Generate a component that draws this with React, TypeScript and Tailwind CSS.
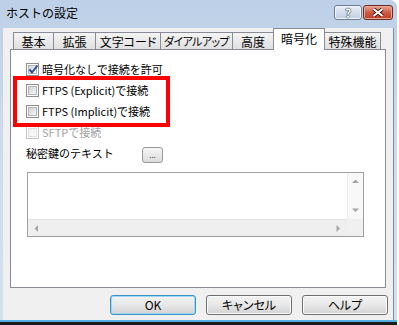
import React from 'react'

const font = "font-['Noto_Sans_CJK_JP',sans-serif]"

function CheckBox({ checked, disabled }: { checked?: boolean; disabled?: boolean }) {
  return (
    <span
      className={`relative flex h-[13px] w-[13px] shrink-0 items-center justify-center border bg-white ${
        disabled ? 'border-[#c4c4c4]' : 'border-[#8e8f8f]'
      }`}
    >
      <span
        className={`h-[9px] w-[9px] border bg-gradient-to-br ${
          disabled
            ? 'border-[#e0e0e0] from-[#f0f0f0] to-[#fafafa]'
            : 'border-[#b4b8bd] from-[#cfd3d8] to-[#f7f7f7]'
        }`}
      />
      {checked && (
        <svg className="absolute left-[1px] top-[0px]" width="11" height="11" viewBox="0 0 11 11">
          <path d="M1.5 5.5 L4 8.5 L9.5 1.5" fill="none" stroke="#2a4f8f" strokeWidth="2" />
        </svg>
      )}
    </span>
  )
}

function Row({ label, checked, disabled }: { label: string; checked?: boolean; disabled?: boolean }) {
  return (
    <div className="flex h-[21px] items-center gap-[3px]">
      <CheckBox checked={checked} disabled={disabled} />
      <span className={`whitespace-nowrap text-[11px] leading-none ${disabled ? 'text-[#a3a3a3]' : 'text-black'}`}>{label}</span>
    </div>
  )
}

function Arrow({ dir }: { dir: 'up' | 'down' | 'left' | 'right' }) {
  const d = {
    up: 'M0 4 L3.5 0.5 L7 4 Z',
    down: 'M0 0.5 L7 0.5 L3.5 4 Z',
    left: 'M4 0 L0.5 3.5 L4 7 Z',
    right: 'M0.5 0 L4 3.5 L0.5 7 Z',
  }[dir]
  const vert = dir === 'up' || dir === 'down'
  return (
    <svg width={vert ? 7 : 5} height={vert ? 5 : 7} viewBox={vert ? '0 0 7 5' : '0 0 5 7'}>
      <path d={d} fill="#a5a5a5" />
    </svg>
  )
}

function Tab({ label, w, active, first, tight }: { label: string; w: number; active?: boolean; first?: boolean; tight?: boolean }) {
  const size = tight ? 'text-[11px] tracking-[-0.6px]' : 'text-[12px]'
  if (active) {
    return (
      <div
        style={{ width: w }}
        className={`-ml-px flex h-[22px] items-start justify-center whitespace-nowrap border-x border-t border-[#898c95] bg-white pt-[3px] leading-[14px] [font-feature-settings:'palt'] ${size}`}
      >
        {label}
      </div>
    )
  }
  return (
    <div
      style={{ width: w }}
      className={`${first ? '' : '-ml-px'} mb-[1px] flex h-[17px] items-center justify-center overflow-hidden whitespace-nowrap border-x border-t border-[#898c95] bg-gradient-to-b from-[#f4f4f4] to-[#e0e0e0] pt-[1px] leading-none [font-feature-settings:'palt'] ${size}`}
    >
      {label}
    </div>
  )
}

function Button({ label, isDefault }: { label: string; isDefault?: boolean }) {
  return (
    <div
      className={`flex h-[20px] w-[86px] items-center justify-center rounded-[3px] border bg-gradient-to-b from-[#f2f2f2] via-[#e8e8e8] to-[#d2d2d2] text-[12px] leading-none [font-feature-settings:'palt'] ${
        isDefault ? 'border-[#3c91c9] shadow-[inset_0_0_0_1px_#9fd8f5]' : 'border-[#707070] shadow-[inset_0_0_0_1px_#fbfbfb]'
      }`}
    >
      {label}
    </div>
  )
}

export default function App() {
  return (
    <div className={`relative h-[325px] w-[399px] overflow-hidden bg-white text-black ${font}`}>
      <div className="flex h-[325px] w-[397px] flex-col rounded-tr-[7px] bg-gradient-to-b from-[#bdd0e7] via-[#cfdcec] to-[#d3e0ee]">
        {/* title bar */}
        <div className="flex h-[28px] items-start">
          <span className="ml-[6px] mt-[6px] text-[12px] leading-[14px]">ホストの設定</span>
          <div className="ml-auto mr-[4px] mt-[5px] flex gap-[1px]">
            <div className="flex h-[15px] w-[28px] items-center justify-center rounded-[3px] border border-[#6b7c94] bg-gradient-to-b from-[#e8eef6] to-[#bfcfe3] shadow-[inset_0_0_0_1px_#f4f8fc]">
              <span className="text-[12px] font-bold leading-none text-white [text-shadow:0_0_1px_#2f3f55,0_0_1px_#2f3f55,0_0_1px_#2f3f55]">?</span>
            </div>
            <div className="flex h-[15px] w-[30px] items-center justify-center rounded-[3px] border border-[#6b2a22] bg-gradient-to-b from-[#e6a595] via-[#cf5a44] to-[#c13a24] shadow-[inset_0_0_0_1px_#eaa898]">
              <svg width="12" height="9" viewBox="0 0 12 9">
                <path d="M1.5 1 L10.5 8 M10.5 1 L1.5 8" stroke="#3b1510" strokeWidth="3.6" />
                <path d="M1.5 1 L10.5 8 M10.5 1 L1.5 8" stroke="#fff" strokeWidth="2" />
              </svg>
            </div>
          </div>
        </div>

        {/* client area */}
        <div className="ml-[3px] h-[292px] w-[391px] border-r border-[#7c8ca2] bg-[#f0f0f0]">
          <div className="relative z-10 -mb-px ml-[10px] flex h-[22px] items-end">
            <Tab label="基本" w={41} first />
            <Tab label="拡張" w={43} />
            <Tab label="文字コード" w={66} />
            <Tab label="ダイアルアップ" w={73} tight />
            <Tab label="高度" w={42} />
            <Tab label="暗号化" w={52} active />
            <Tab label="特殊機能" w={57} />
          </div>

          <div className="ml-[7px] h-[239px] w-[376px] border border-[#898c95] bg-white pl-[15px] pt-[9px]">
            <Row label="暗号化なしで接続を許可" checked />
            <Row label="FTPS (Explicit)で接続" />
            <Row label="FTPS (Implicit)で接続" />
            <Row label="SFTPで接続" disabled />
            <div className="flex h-[21px] items-center">
              <span className="w-[116px] text-[11px] leading-none">秘密鍵のテキスト</span>
              <div className="mt-[3px] flex h-[16px] w-[21px] items-end justify-center rounded-[3px] border border-[#9a9a9a] bg-gradient-to-b from-[#f6f6f6] to-[#dcdcdc] pb-[3px] text-[8px] leading-none text-[#333]">
                ...
              </div>
            </div>

            <div className="ml-[1px] mt-[8px] flex h-[65px] w-[337px] flex-col border border-[#a0a0a0] bg-white">
              <div className="flex flex-1">
                <div className="flex-1" />
                <div className="flex w-[16px] flex-col items-center justify-between border-l border-[#eeeeee] bg-[#f8f8f8] py-[6px]">
                  <Arrow dir="up" />
                  <Arrow dir="down" />
                </div>
              </div>
              <div className="flex h-[17px]">
                <div className="flex flex-1 items-center justify-between border-t border-[#e4e4e4] bg-[#efefef] px-[6px]">
                  <Arrow dir="left" />
                  <Arrow dir="right" />
                </div>
                <div className="w-[16px] bg-[#f0f0f0]" />
              </div>
            </div>
          </div>

          <div className="mt-[7px] flex justify-end gap-[10px] pr-[5px]">
            <Button label="OK" isDefault />
            <Button label="キャンセル" />
            <Button label="ヘルプ" />
          </div>
        </div>

        <div className="h-[2px] bg-[#57afe0]" />
        <div className="h-[3px] bg-[#1b1b1b]" />
      </div>

      {/* annotation */}
      <div className="absolute left-[13px] top-[76px] h-[51px] w-[157px] border-4 border-[#ff0000]" />
    </div>
  )
}
